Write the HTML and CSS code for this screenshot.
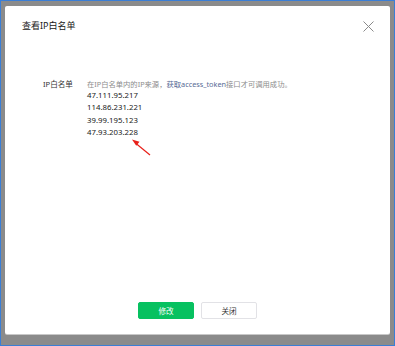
FILE: index.html
```html
<!DOCTYPE html>
<html lang="zh-CN">
<head>
    <meta charset="UTF-8">
    <meta name="viewport" content="width=device-width, initial-scale=1.0">
    <title>查看IP白名单</title>
    <link rel="stylesheet" href="styles.css">
</head>
<body>
    <!-- Screen frame with the dimmed page behind the dialog -->
    <div class="frame">
        <div class="dialog">
            <div class="dialogHeader">
                <h3 class="dialogTitle">查看IP白名单</h3>
                <span class="closeBtn">
                    <svg width="11" height="11" viewBox="0 0 11 11">
                        <path d="M0.5 0.5 L10.5 10.5 M10.5 0.5 L0.5 10.5" stroke="#8a8a8a" stroke-width="1" fill="none"/>
                    </svg>
                </span>
            </div>

            <div class="dialogBody">
                <div class="formRow">
                    <label class="formLabel">IP白名单</label>
                    <div class="formValue">
                        <p class="tips">在IP白名单内的IP来源，<a href="#">获取access_token</a>接口才可调用成功。</p>
                        <ul class="ipList">
                            <li>47.111.95.217</li>
                            <li>114.86.231.221</li>
                            <li>39.99.195.123</li>
                            <li>47.93.203.228</li>
                        </ul>
                    </div>
                </div>

                <!-- Red annotation arrow pointing at the last IP -->
                <svg class="arrow" width="24" height="20" viewBox="0 0 24 20">
                    <path d="M20 18 L6 6.5" stroke="#e8201a" stroke-width="1.2" fill="none"/>
                    <path d="M2 2.5 L9.5 4.8 L6.3 8.8 Z" fill="#e8201a"/>
                </svg>
            </div>

            <div class="dialogFooter">
                <button class="btn btnPrimary">修改</button>
                <button class="btn btnDefault">关闭</button>
            </div>
        </div>
    </div>
</body>
</html>
```

FILE: styles.css
```css
/* Base page */
body {
    margin: 0;
    padding: 0;
    font-family: "Noto Sans", "Noto Sans CJK SC", sans-serif;
}

/* Outer frame: blue border and the grey mask */
.frame {
    box-sizing: border-box;
    width: 395px;
    height: 346px;
    border: 1px solid #3a7ed6;
    background: #8b8b8b;
    padding: 5px 4px 11px 4px;
}

/* Dialog box */
.dialog {
    position: relative;
    display: flex;
    flex-direction: column;
    height: 100%;
    background: #fff;
    border-radius: 2px;
    box-shadow: 0 1px 0 #c8c8c8;
}

.dialogHeader {
    display: flex;
    align-items: center;
    justify-content: space-between;
    padding: 14px 16px 0 17px;
}

.dialogTitle {
    margin: 0;
    font-size: 9px;
    line-height: 12px;
    font-weight: normal;
    color: #191919;
}

.closeBtn {
    display: flex;
    width: 11px;
    height: 11px;
}

/* Body content */
.dialogBody {
    position: relative;
    flex: 1;
    padding: 47px 0 0 38px;
}

.formRow {
    display: flex;
}

.formLabel {
    width: 44px;
    font-size: 7.6px;
    line-height: 11px;
    color: #333;
}

.formValue {
    font-size: 7.6px;
}

.tips {
    margin: 0 0 -1px 0;
    font-size: 7.3px;
    line-height: 11px;
    color: #8c8c8c;
}

.tips a {
    color: #576b95;
    text-decoration: none;
}

.ipList {
    margin: 0;
    padding: 0;
    list-style: none;
    font-size: 7.8px;
    line-height: 12.4px;
    color: #222;
}

.arrow {
    position: absolute;
    left: 125px;
    top: 105px;
}

/* Footer buttons */
.dialogFooter {
    display: flex;
    justify-content: center;
    gap: 7px;
    padding-bottom: 15px;
}

.btn {
    box-sizing: border-box;
    width: 56px;
    height: 17px;
    padding: 0;
    border-radius: 2px;
    font-family: inherit;
    font-size: 7.6px;
    cursor: pointer;
}

.btnPrimary {
    background: #07c160;
    border: 1px solid #07c160;
    color: #fff;
}

.btnDefault {
    background: #fff;
    border: 1px solid #e2e2e6;
    color: #333;
}
```
